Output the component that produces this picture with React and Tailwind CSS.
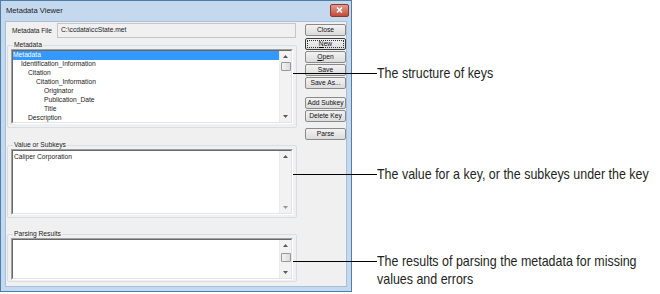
import React from "react";

const ui = { fontFamily: '"Liberation Sans", Arial, sans-serif' };

const treeRows = [
  { label: "Metadata", indent: 0, selected: true },
  { label: "Identification_Information", indent: 8 },
  { label: "Citation", indent: 15 },
  { label: "Citation_Information", indent: 23 },
  { label: "Originator", indent: 31 },
  { label: "Publication_Date", indent: 31 },
  { label: "Title", indent: 31 },
  { label: "Description", indent: 15 },
];

function Arrow({ up }) {
  return (
    <svg width="5" height="3" viewBox="0 0 5 3">
      <path d={up ? "M0 3 L2.5 0 L5 3 Z" : "M0 0 L2.5 3 L5 0 Z"} fill="#5a5a5a" />
    </svg>
  );
}

function ScrollBar({ thumbTop, disabled }) {
  return (
    <div className="relative w-[12px] h-full bg-[#f2f2f2] border-l border-[#ececec] flex flex-col items-center justify-between py-[4px]">
      <Arrow up />
      {thumbTop !== undefined && (
        <div
          className="absolute left-[1px] w-[10px] h-[9px] rounded-[1px] border border-[#979797] bg-gradient-to-r from-[#f3f3f3] to-[#dcdcdc]"
          style={{ top: thumbTop }}
        />
      )}
      <div className={disabled ? "opacity-60" : ""}>
        <Arrow />
      </div>
    </div>
  );
}

function GroupBox({ label, className, children }) {
  return (
    <div className={"relative border border-[#d5dfe5] rounded-[2px] " + className}>
      <span className="absolute -top-[5px] left-[5px] bg-[#f0f0f0] px-[1px] text-[6.7px] leading-[8px] text-[#222]">
        {label}
      </span>
      {children}
    </div>
  );
}

function SunkenBox({ className, children }) {
  return (
    <div className={"border border-t-[#a0a0a0] border-l-[#a0a0a0] border-r-white border-b-white " + className}>
      <div className="h-full border border-t-[#696969] border-l-[#696969] border-r-[#e3e3e3] border-b-[#e3e3e3] bg-white flex">
        {children}
      </div>
    </div>
  );
}

function Btn({ children, className = "", primary }) {
  return (
    <div
      className={
        "h-[12px] w-[41px] rounded-[2px] border bg-gradient-to-b from-[#f2f2f2] to-[#dcdcdc] flex items-center justify-center text-[6.7px] text-[#111] " +
        (primary ? "border-[#3c3c3c] " : "border-[#8a8a8a] ") +
        className
      }
    >
      {primary ? (
        <span className="border border-dotted border-[#333] w-[37px] h-[8px] flex items-center justify-center leading-none">
          {children}
        </span>
      ) : (
        children
      )}
    </div>
  );
}

function Callout({ top, children }) {
  return (
    <div
      className="absolute left-[377px] text-[15px] leading-[18px] text-[#231f20] whitespace-nowrap scale-x-[0.83] origin-left"
      style={{ top }}
    >
      {children}
    </div>
  );
}

export default function App() {
  return (
    <div className="relative w-[660px] h-[294px] bg-white overflow-hidden" style={ui}>
      <div className="w-[352px] h-[292px] border border-[#4f7fa8] bg-[#c5d9ee] flex flex-col">
        {/* title bar */}
        <div className="h-[20px] flex items-center justify-between pl-[5px] pr-[2px]">
          <span className="text-[7.6px] text-[#1a1a1a]">Metadata Viewer</span>
          <div className="w-[19px] h-[13px] mb-[2px] rounded-[2px] border border-[#8b3a32] bg-gradient-to-b from-[#e39a8e] to-[#c24a3a] flex items-center justify-center">
            <svg width="7" height="6" viewBox="0 0 7 6">
              <path d="M1 0.5 L6 5.5 M6 0.5 L1 5.5" stroke="white" strokeWidth="1.6" />
            </svg>
          </div>
        </div>

        {/* client area */}
        <div className="mx-[4px] mb-[4px] flex-1 bg-[#f0f0f0] border border-[#a8bfd7] flex">
          <div className="w-[292px] flex flex-col">
            <div className="mt-[1px] h-[15px] flex items-center">
              <span className="w-[51px] pl-[6px] text-[6.6px] text-[#222] whitespace-nowrap">
                Metadata File
              </span>
              <div className="w-[239px] h-[15px] border border-[#c5c5c5] bg-[#f0f0f0] flex items-center pl-[3px] text-[6.7px] text-[#222]">
                C:\ccdata\ccState.met
              </div>
            </div>

            <GroupBox label="Metadata" className="mt-[7px] ml-[1px] w-[290px] h-[83px]">
              <SunkenBox className="mt-[3px] ml-[3px] w-[282px] h-[75px]">
                <div className="flex-1 overflow-hidden">
                  {treeRows.map((r) => (
                    <div key={r.label} className="h-[9px] flex items-center text-[6.7px] leading-none whitespace-nowrap">
                      <span
                        className={
                          r.selected
                            ? "w-full h-full flex items-center bg-[#3399ff] text-white"
                            : "text-[#1a1a1a]"
                        }
                        style={{ paddingLeft: r.indent }}
                      >
                        {r.label}
                      </span>
                    </div>
                  ))}
                </div>
                <ScrollBar thumbTop={11} />
              </SunkenBox>
            </GroupBox>

            <GroupBox label="Value or Subkeys" className="mt-[17px] ml-[1px] w-[290px] h-[73px]">
              <SunkenBox className="mt-[3px] ml-[3px] w-[282px] h-[66px]">
                <div className="flex-1 pl-[1px] pt-[1px] text-[6.7px] text-[#1a1a1a] leading-[9px]">
                  Caliper Corporation
                </div>
                <ScrollBar disabled />
              </SunkenBox>
            </GroupBox>

            <GroupBox label="Parsing Results" className="mt-[16px] ml-[1px] w-[290px] h-[48px]">
              <SunkenBox className="mt-[3px] ml-[3px] w-[282px] h-[42px]">
                <div className="flex-1" />
                <ScrollBar thumbTop={13} />
              </SunkenBox>
            </GroupBox>
          </div>

          <div className="ml-[7px] mt-[2px] flex flex-col">
            <Btn>Close</Btn>
            <Btn primary className="mt-[2px]">
              <span className="underline">N</span>ew
            </Btn>
            <Btn className="mt-[1px]">
              <span className="underline">O</span>pen
            </Btn>
            <Btn className="mt-[1px]">
              <span className="underline">S</span>ave
            </Btn>
            <Btn className="mt-[1px]">Save As...</Btn>
            <Btn className="mt-[8px]">Add Subkey</Btn>
            <Btn className="mt-[1px]">Delete Key</Btn>
            <Btn className="mt-[6px]">Parse</Btn>
          </div>
        </div>
      </div>

      {/* callouts */}
      <div className="absolute left-[293px] top-[73px] w-[84px] h-[1px] bg-black" />
      <div className="absolute left-[293px] top-[174px] w-[84px] h-[1px] bg-black" />
      <div className="absolute left-[293px] top-[261px] w-[84px] h-[1px] bg-black" />

      <Callout top={64}>The structure of keys</Callout>
      <Callout top={165}>The value for a key, or the subkeys under the key</Callout>
      <Callout top={252}>
        The results of parsing the metadata for missing
        <br />
        values and errors
      </Callout>
    </div>
  );
}
